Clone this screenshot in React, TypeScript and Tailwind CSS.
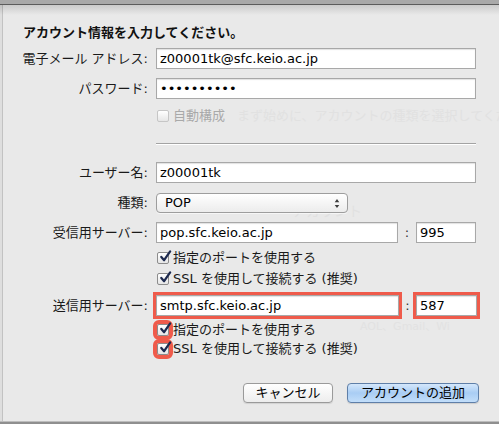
import React from "react";

const font = "font-['DejaVu_Sans','Noto_Sans_CJK_JP',sans-serif]";

function CheckBox({ checked, disabled, marked }: { checked?: boolean; disabled?: boolean; marked?: boolean }) {
  return (
    <span
      className={
        "relative inline-block h-[12px] w-[12px] shrink-0 rounded-[2px] border bg-gradient-to-b from-white to-[#e6e6e6] " +
        (disabled ? "border-[#c6c6c6]" : "border-[#8c8c8c]") +
        (marked ? " outline-[4px] outline-solid outline-[#ef5b4b]" : "")
      }
    >
      {checked && (
        <svg viewBox="0 0 14 14" className="absolute left-[1px] top-[-3px] h-[13px] w-[13px]">
          <path d="M2.5 7.5 L5.5 11 L12 1.5" fill="none" stroke="#1d2a4f" strokeWidth="2.4" strokeLinecap="round" strokeLinejoin="round" />
        </svg>
      )}
    </span>
  );
}

function Field({ value, width, marked }: { value: string; width: string; marked?: boolean }) {
  return (
    <div
      className={
        "h-[21px] border border-[#a8a8a8] bg-white px-[3px] text-[13px] leading-[19px] text-black shadow-[inset_0_1px_1px_rgba(0,0,0,0.12)] " +
        width +
        (marked ? " outline-[3px] outline-solid outline-[#ef5b4b]" : "")
      }
    >
      {value}
    </div>
  );
}

function Label({ children }: { children: React.ReactNode }) {
  return <div className="w-[150px] shrink-0 pr-[2px] text-right text-[13px] leading-[16px] text-[#1a1a1a]">{children}</div>;
}

function CheckRow({ label, checked, disabled, marked, className }: { label: string; checked?: boolean; disabled?: boolean; marked?: boolean; className: string }) {
  return (
    <div className={"flex h-[16px] items-center pl-[157px] " + className}>
      <CheckBox checked={checked} disabled={disabled} marked={marked} />
      <span className={"ml-[4px] text-[13px] leading-[16px] " + (disabled ? "text-[#a9a9a9]" : "text-[#1a1a1a]")}>{label}</span>
    </div>
  );
}

export default function App() {
  return (
    <div className={"relative h-[424px] w-[499px] overflow-hidden bg-[#e9e9e9] " + font}>
      {/* window frame */}
      <div className="absolute left-0 top-0 h-full w-[3px] border-r border-[#c2c2c2] bg-[#dedede]" />
      <div className="absolute left-0 right-0 top-0 h-[5px] border-b border-[#5c5c5c] bg-[#a9a9a9]" />
      <div className="absolute left-0 right-0 top-[5px] h-[10px] bg-gradient-to-b from-[rgba(0,0,0,0.13)] to-transparent" />
      <div className="absolute bottom-0 left-0 right-0 h-[3px] border-t border-[#bdbdbd] bg-[#8f8f8f]" />

      {/* window behind, showing through */}
      <div className="absolute left-[237px] top-[108px] whitespace-nowrap text-[13px] leading-[16px] text-[#e1e1e1]">まず始めに、アカウントの種類を選択してくだ</div>
      <div className="absolute left-[292px] top-[203px] whitespace-nowrap text-[14px] leading-[16px] text-[#e1e1e1]">アカウント</div>
      <div className="absolute left-[360px] top-[320px] whitespace-nowrap text-[11px] leading-[13px] text-[#e2e2e2]">AOL、Gmail、Wi</div>

      <div className="relative flex flex-col pt-[25px]">
        <div className="pl-[23px] text-[13px] font-bold leading-[16px] text-[#111]">アカウント情報を入力してください。</div>

        <div className="mt-[7px] flex items-center gap-[6px]">
          <Label>電子メール アドレス:</Label>
          <Field value="z00001tk@sfc.keio.ac.jp" width="w-[320px]" />
        </div>

        <div className="mt-[9px] flex items-center gap-[6px]">
          <Label>パスワード:</Label>
          <Field value="••••••••••" width="w-[320px]" />
        </div>

        <CheckRow label="自動構成" disabled className="mt-[9px]" />

        <div className="ml-[156px] mt-[19px] h-[2px] w-[320px] border-b border-t border-b-white border-t-[#a3a3a3]" />

        <div className="mt-[17px] flex items-center gap-[6px]">
          <Label>ユーザー名:</Label>
          <Field value="z00001tk" width="w-[320px]" />
        </div>

        <div className="mt-[10px] flex items-center gap-[6px]">
          <Label>種類:</Label>
          <div className="flex h-[20px] w-[192px] items-center justify-between rounded-[4px] border border-[#9d9d9d] bg-gradient-to-b from-white to-[#ececec] pl-[8px] pr-[7px] text-[13px] leading-[18px] text-black shadow-[0_1px_0_rgba(255,255,255,0.6)]">
            <span>POP</span>
            <svg viewBox="0 0 6 12" className="h-[11px] w-[6px]">
              <path d="M3 1 L5.5 4.5 L0.5 4.5 Z M3 11 L5.5 7.5 L0.5 7.5 Z" fill="#3d3d3d" />
            </svg>
          </div>
        </div>

        <div className="mt-[9px] flex items-center gap-[6px]">
          <Label>受信用サーバー:</Label>
          <div className="flex items-center">
            <Field value="pop.sfc.keio.ac.jp" width="w-[242px]" />
            <span className="w-[18px] text-center text-[13px] leading-[16px] text-[#333]">:</span>
            <Field value="995" width="w-[60px]" />
          </div>
        </div>

        <CheckRow label="指定のポートを使用する" checked className="mt-[7px]" />
        <CheckRow label="SSL を使用して接続する (推奨)" checked className="mt-[5px]" />

        <div className="mt-[8px] flex items-center gap-[6px]">
          <Label>送信用サーバー:</Label>
          <div className="flex items-center">
            <Field value="smtp.sfc.keio.ac.jp" width="w-[243px]" marked />
            <span className="w-[17px] text-center text-[13px] leading-[16px] text-[#333]">:</span>
            <Field value="587" width="w-[61px]" marked />
          </div>
        </div>

        <CheckRow label="指定のポートを使用する" checked marked className="mt-[6px]" />
        <CheckRow label="SSL を使用して接続する (推奨)" checked marked className="mt-[3px]" />

        <div className="mt-[26px] flex justify-end gap-[14px] pr-[20px]">
          <button className="h-[20px] w-[90px] rounded-[4px] border border-[#9a9a9a] bg-gradient-to-b from-white to-[#ededed] text-[13px] leading-[18px] text-black shadow-[0_1px_1px_rgba(0,0,0,0.1)]">
            キャンセル
          </button>
          <button className="h-[20px] w-[132px] rounded-[4px] border border-[#5f7fa8] bg-gradient-to-b from-[#d4e7fb] via-[#a9cdf4] to-[#c2defa] text-[13px] leading-[18px] text-black shadow-[0_1px_1px_rgba(0,0,0,0.12)]">
            アカウントの追加
          </button>
        </div>
      </div>
    </div>
  );
}
